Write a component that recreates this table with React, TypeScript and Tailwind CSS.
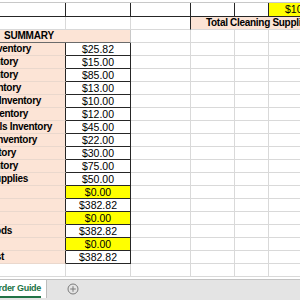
const dataRows = [
  { label: 'Produce Inventory', pr: 'pr-[34px]', value: '$25.82', hi: false },
  { label: 'Meat Inventory', pr: 'pr-[47px]', value: '$15.00', hi: false },
  { label: 'Seafood Inventory', pr: 'pr-[47px]', value: '$85.00', hi: false },
  { label: 'Dairy Inventory', pr: 'pr-[44px]', value: '$13.00', hi: false },
  { label: 'Dry Goods Inventory', pr: 'pr-[24px]', value: '$10.00', hi: false },
  { label: 'Bakery Inventory', pr: 'pr-[37px]', value: '$12.00', hi: false },
  { label: 'Chemicals Inventory', pr: 'pr-[13px]', value: '$45.00', hi: false },
  { label: 'Beverage Inventory', pr: 'pr-[28px]', value: '$22.00', hi: false },
  { label: 'Liquor Inventory', pr: 'pr-[49px]', value: '$30.00', hi: false },
  { label: 'Wine Inventory', pr: 'pr-[47px]', value: '$75.00', hi: false },
  { label: 'Cleaning Supplies', pr: 'pr-[37px]', value: '$50.00', hi: false },
  { label: '', pr: 'pr-[4px]', value: '$0.00', hi: true },
  { label: '', pr: 'pr-[4px]', value: '$382.82', hi: false },
  { label: '', pr: 'pr-[4px]', value: '$0.00', hi: true },
  { label: 'Cost of Goods', pr: 'pr-[53px]', value: '$382.82', hi: false },
  { label: '', pr: 'pr-[4px]', value: '$0.00', hi: true },
  { label: 'Net Cost', pr: 'pr-[61px]', value: '$382.82', hi: false },
];

// the grey cells to the right of the summary table
function RightCells() {
  return (
    <>
      <div className="w-[60px] h-full border-r border-b border-[#d9d9d9]"></div>
      <div className="w-[44px] h-full border-r border-b border-[#d9d9d9]"></div>
      <div className="w-[34px] h-full border-r border-b border-[#d9d9d9]"></div>
      <div className="flex-1 h-full border-b border-[#d9d9d9]"></div>
    </>
  );
}

function App() {
  return (
    <div className="w-[300px] h-[300px] overflow-hidden bg-white font-['Liberation_Sans',Arial,sans-serif] text-black flex flex-col">
      <div className="pt-[2px]">
        {/* top row */}
        <div className="flex h-[15px] border-t border-[#c8c8c8]">
          <div className="w-[66px] h-full border-r border-b border-[#262626]"></div>
          <div className="w-[65px] h-full border-r border-b border-[#262626]"></div>
          <div className="w-[60px] h-full border-r border-b border-[#262626]"></div>
          <div className="w-[44px] h-full border-r border-b border-[#262626]"></div>
          <div className="w-[34px] h-full border-r border-b border-[#262626]"></div>
          <div className="flex-1 h-full border-b border-[#262626] bg-[#ffff00] overflow-hidden whitespace-nowrap pl-[16px] text-[10.5px] leading-[13px]">
            $100.00
          </div>
        </div>

        {/* total cleaning supplies */}
        <div className="flex h-[13px]">
          <div className="w-[66px] h-full border-r border-b border-[#d9d9d9]"></div>
          <div className="w-[65px] h-full border-r border-b border-[#d9d9d9]"></div>
          <div className="w-[60px] h-full border-r border-b border-r-[#262626] border-b-[#d9d9d9]"></div>
          <div className="flex-1 h-full border-b border-[#d9d9d9] bg-[#fce4d6] overflow-hidden whitespace-nowrap pl-[15px] text-[10px] font-bold tracking-[-0.3px] leading-[12px]">
            Total Cleaning Supplies
          </div>
        </div>

        {/* summary header */}
        <div className="flex h-[13px]">
          <div className="w-[131px] h-full border-r border-b border-r-[#c8c8c8] border-b-[#6b6b6b] bg-[#fce4d6] pl-[4px] text-[10px] font-bold tracking-[-0.2px] leading-[12px]">
            SUMMARY
          </div>
          <RightCells />
        </div>

        {dataRows.map((r, i) => (
          <div key={i} className="flex h-[13px]">
            <div className={`w-[66px] h-full border-r border-b border-r-[#262626] border-b-[#ead8cd] bg-[#fce4d6] flex justify-end overflow-hidden whitespace-nowrap ${r.pr} text-[10px] font-bold tracking-[-0.3px] leading-[12px]`}>
              <span className="shrink-0">{r.label}</span>
            </div>
            <div className={`w-[65px] h-full border-r border-b border-[#262626] text-center text-[10.5px] leading-[12px] ${r.hi ? 'bg-[#ffff00]' : 'bg-white'}`}>
              {r.value}
            </div>
            <RightCells />
          </div>
        ))}

        {/* empty row below */}
        <div className="flex h-[13px]">
          <div className="w-[66px] h-full border-r border-b border-[#d9d9d9]"></div>
          <div className="w-[65px] h-full border-r border-b border-[#d9d9d9]"></div>
          <RightCells />
        </div>
      </div>

      {/* sheet tabs */}
      <div className="mt-[2px] flex-1 bg-[#e4e4e4] border-t border-[#c3c3c3] flex items-start">
        <div className="w-[47px] h-[18px] bg-white border-r border-[#bdbdbd] flex justify-end overflow-hidden whitespace-nowrap pr-[5px]">
          <span className="shrink-0 text-[9px] font-bold tracking-[-0.3px] text-[#217346] leading-[11px] mt-[3px] border-b-2 border-[#217346]">
            Order Guide
          </span>
        </div>
        <div className="ml-[20px] mt-[3px]">
          <svg width="12" height="12" viewBox="0 0 12 12">
            <circle cx="6" cy="6" r="5" fill="none" stroke="#7b7b7b" strokeWidth="1" />
            <path d="M6 3.2v5.6M3.2 6h5.6" stroke="#7b7b7b" strokeWidth="1" />
          </svg>
        </div>
      </div>
    </div>
  );
}

export default App;
